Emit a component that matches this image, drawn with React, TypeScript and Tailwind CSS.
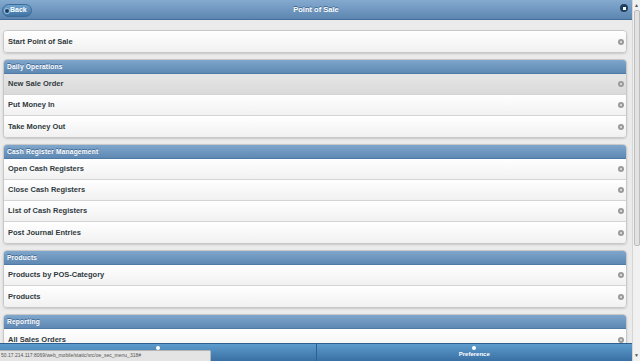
import React from 'react';

interface Section {
  title?: string;
  items: string[];
}

const sections: Section[] = [
  { items: ['Start Point of Sale'] },
  { title: 'Daily Operations', items: ['New Sale Order', 'Put Money In', 'Take Money Out'] },
  {
    title: 'Cash Register Management',
    items: ['Open Cash Registers', 'Close Cash Registers', 'List of Cash Registers', 'Post Journal Entries'],
  },
  { title: 'Products', items: ['Products by POS-Category', 'Products'] },
  { title: 'Reporting', items: ['All Sales Orders'] },
];

function ArrowDot() {
  return (
    <span className="flex h-[6px] w-[6px] items-center justify-center rounded-full bg-[#9a9a9a]">
      <span className="h-[2px] w-[2px] rounded-full bg-[#e6e6e6]" />
    </span>
  );
}

function Row({ label, active, last }: { label: string; active?: boolean; last?: boolean }) {
  return (
    <div
      className={
        'flex h-[21px] items-center justify-between pl-[4px] pr-[2px] ' +
        (active ? 'bg-gradient-to-b from-[#e6e6e6] to-[#dadada] ' : 'bg-gradient-to-b from-[#ffffff] to-[#f1f1f1] ') +
        (last ? '' : 'border-b border-[#d4d4d4]')
      }
    >
      <span className="text-[7.5px] font-bold text-[#2f3a40]">{label}</span>
      <ArrowDot />
    </div>
  );
}

function ListBlock({ section }: { section: Section }) {
  return (
    <div className="overflow-hidden rounded-[4px] border border-[#c8c8c8] shadow-[0_1px_2px_rgba(0,0,0,0.15)]">
      {section.title && (
        <div className="flex h-[14px] items-center border-b border-[#4f7aa5] bg-gradient-to-b from-[#7fa6cc] to-[#5f89b3] pl-[3px]">
          <span className="text-[6.6px] font-bold tracking-[0.2px] text-white [text-shadow:0_-1px_0_#3e6790]">
            {section.title}
          </span>
        </div>
      )}
      {section.items.map((item, i) => (
        <Row
          key={item}
          label={item}
          active={item === 'New Sale Order'}
          last={i === section.items.length - 1}
        />
      ))}
    </div>
  );
}

export default function App() {
  return (
    <div className="relative flex h-[361px] w-[640px] overflow-hidden bg-[#ebebeb] font-['Liberation_Sans',Arial,sans-serif]">
      <div className="flex w-[632px] flex-col">
        {/* Header */}
        <div className="relative flex h-[20px] shrink-0 items-center justify-center border-b border-[#456f9a] bg-gradient-to-b from-[#85aad0] to-[#5c86b0]">
          <button className="absolute left-[2px] top-[4px] flex h-[13px] items-center gap-[1px] rounded-full border border-[#3d6a97] bg-gradient-to-b from-[#6ea3cf] to-[#3f73a5] pl-[2px] pr-[4px]">
            <span className="h-[4px] w-[4px] rounded-full bg-[#1f3f60] ring-1 ring-[#9cc0e0]" />
            <span className="text-[7px] font-bold text-white">Back</span>
          </button>
          <span className="text-[7.5px] font-bold text-white [text-shadow:0_-1px_0_#3e6790]">Point of Sale</span>
          <span className="absolute right-[4px] top-[4px] flex h-[8px] w-[8px] items-center justify-center rounded-full bg-[#1f3f60]">
            <span className="h-[3px] w-[3px] bg-white" />
          </span>
        </div>

        {/* Content */}
        <div className="flex flex-col gap-[6px] pl-[3px] pr-[5px] pt-[10px]">
          {sections.map((s, i) => (
            <ListBlock key={i} section={s} />
          ))}
        </div>
      </div>

      {/* Scrollbar */}
      <div className="flex w-[8px] flex-col items-center border-l border-[#d6d6d6] bg-[#f1f1f1]">
        <span className="mt-[3px] text-[5px] leading-none text-[#555]">▲</span>
        <div className="mt-[2px] h-[236px] w-[6px] rounded-[2px] border border-[#bdbdbd] bg-[#e2e2e2]" />
        <span className="mt-auto mb-[3px] text-[5px] leading-none text-[#555]">▼</span>
      </div>

      {/* Footer navbar */}
      <div className="absolute bottom-0 left-0 flex h-[18px] w-[632px] border-t border-[#2f5f8d]">
        <div className="flex flex-1 flex-col items-center border-r border-[#2f5f8d] bg-gradient-to-b from-[#5d9ccd] to-[#3a70a3] pt-[2px]">
          <span className="h-[4px] w-[4px] rounded-full bg-white" />
        </div>
        <div className="flex flex-1 flex-col items-center bg-gradient-to-b from-[#5d9ccd] to-[#3a70a3] pt-[2px]">
          <span className="h-[4px] w-[4px] rounded-full bg-white" />
          <span className="mt-[1px] text-[6px] font-bold leading-none text-white">Preference</span>
        </div>
      </div>

      {/* Status bar */}
      <div className="absolute bottom-0 left-0 flex h-[11px] w-[211px] items-center rounded-tr-[2px] border-t border-r border-[#b5b5b5] bg-[#e4e4e4] pl-[1px]">
        <span className="text-[5px] text-[#555]">50.17.214.117:8069/web_mobile/static/src/oe_sec_menu_318#</span>
      </div>
    </div>
  );
}
